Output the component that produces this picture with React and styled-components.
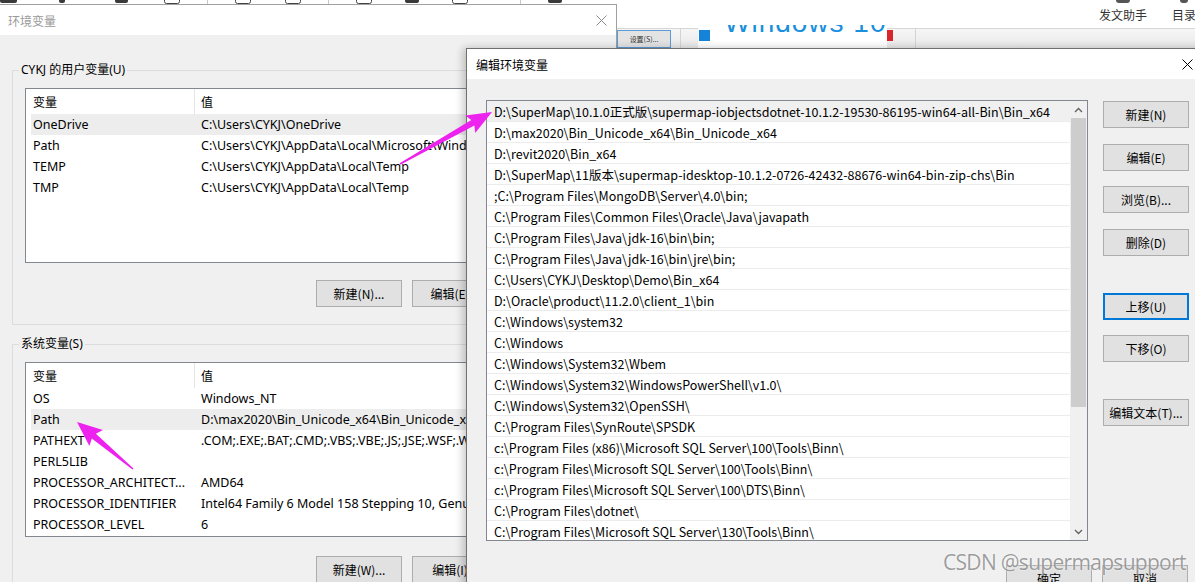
import React from "react"
import styled, { createGlobalStyle, css } from "styled-components"

const GlobalStyle = createGlobalStyle`
  html, body {
    margin: 0;
    padding: 0;
  }
  body {
    background: #ffffff;
    font-family: "Noto Sans", "Noto Sans CJK SC", sans-serif;
  }
`

const Desktop = styled.div`
    position: relative;
    width: 1195px;
    height: 582px;
    overflow: hidden;
    background: #ffffff;
`

/* ---------- app behind the dialogs ---------- */

const TopBar = styled.div`
    height: 28px;
    display: flex;
    align-items: flex-start;
    border-bottom: 1px solid #d6d6d6;
    background: #ffffff;
`
const ToolGroup = styled.div`
    margin-left: auto;
    display: flex;
    gap: 25px;
    margin-right: -1px;
`
const Tool = styled.div`
    display: flex;
    flex-direction: column;
    align-items: center;
`
const ToolStub = styled.div`
    width: ${p => p.$w}px;
    height: 3px;
    background: #555;
    border-radius: 0 0 3px 3px;
`
const ToolLabel = styled.div`
    margin-top: 4px;
    font-family: "Noto Sans CJK SC", sans-serif;
    font-size: 12px;
    line-height: 16px;
    color: #333;
    white-space: nowrap;
`
const SubStrip = styled.div`
    height: 19px;
    display: flex;
    align-items: flex-start;
    background: linear-gradient(#f6f6f6, #e9e9e9);
`
const StripSpacer = styled.div`
    width: ${p => p.$w}px;
    flex-shrink: 0;
`
const SetButton = styled.div`
    width: 54px;
    height: 18px;
    margin-top: 1px;
    box-sizing: border-box;
    border: 1px solid #5b9bd9;
    background: #e3e3e3;
    font-family: "Noto Sans CJK SC", sans-serif;
    font-size: 7px;
    line-height: 16px;
    text-align: center;
    color: #333;
`
const VLine = styled.div`
    width: 1px;
    height: 19px;
    background: #d4d4d4;
    margin-left: ${p => p.$ml}px;
`
const PromoPanel = styled.div`
    width: 189px;
    height: 23px;
    margin-top: -4px;
    margin-left: 17px;
    background: #ffffff;
    overflow: hidden;
    display: flex;
    align-items: flex-start;
`
const WinSquare = styled.div`
    width: 11px;
    height: 11px;
    margin: 5px 0 0 1px;
    background: #1583d8;
`
const WinText = styled.div`
    margin: -19px 0 0 14px;
    font-family: "Liberation Sans", sans-serif;
    font-size: 28px;
    line-height: 34px;
    letter-spacing: 1px;
    color: #1a8fdc;
    white-space: nowrap;
`
const RedMark = styled.div`
    width: 6px;
    height: 11px;
    margin: 1px 0 0 0;
    background: #d9262c;
`

/* ---------- shared window parts ---------- */

const TitleBar = styled.div`
    height: 30px;
    flex-shrink: 0;
    display: flex;
    align-items: center;
    background: #ffffff;
    padding-left: ${p => p.$pad}px;
    font-family: "Noto Sans CJK SC", sans-serif;
    font-size: 12px;
    color: ${p => (p.$active ? "#000000" : "#9a9a9a")};
`
const CloseButton = styled.div`
    margin-left: auto;
    width: ${p => p.$w}px;
    height: 30px;
    display: flex;
    align-items: center;
    justify-content: center;
`
const Button = styled.button`
    width: 86px;
    height: 27px;
    flex-shrink: 0;
    box-sizing: border-box;
    padding: 0;
    margin: ${p => p.$mt || 0}px 0 0 0;
    background: #e1e1e1;
    border: 1px solid #adadad;
    font-family: "Noto Sans CJK SC", sans-serif;
    font-size: 12px;
    color: #000;
    white-space: nowrap;
    ${p => p.$focused && css`
        border: 2px solid #0078d7;
    `}
`

function CloseIcon({ color }) {
    return (
        <svg width="11" height="11" viewBox="0 0 11 11">
            <path d="M0.5 0.5 L10.5 10.5 M10.5 0.5 L0.5 10.5" stroke={color} strokeWidth="1" fill="none" />
        </svg>
    )
}

/* ---------- 环境变量 window ---------- */

const EnvWindow = styled.div`
    position: absolute;
    left: 0;
    top: 4px;
    width: 617px;
    height: 600px;
    box-sizing: border-box;
    border: 1px solid #a0a0a0;
    border-left: none;
    background: #f0f0f0;
    display: flex;
    flex-direction: column;
`
const EnvBody = styled.div`
    padding: 27px 12px 0 12px;
`
const GroupBox = styled.fieldset`
    margin: ${p => p.$mt || 0}px 0 0 0;
    padding: 10px 2px 17px 6px;
    border: 1px solid #dcdcdc;
    min-width: 0;
`
const GroupLegend = styled.legend`
    padding: 0 2px;
    font-family: "Noto Sans", "Noto Sans CJK SC", sans-serif;
    font-size: 12px;
    line-height: 16px;
    color: #000;
`
const ListView = styled.div`
    height: 175px;
    margin-left: 6px;
    box-sizing: border-box;
    border: 1px solid #828790;
    background: #ffffff;
    overflow: hidden;
`
const ListHeader = styled.div`
    height: 25px;
    margin-left: 5px;
    display: grid;
    grid-template-columns: 164px 1fr;
`
const HeaderCell = styled.div`
    padding-left: ${p => (p.$first ? 2 : 6)}px;
    border-right: ${p => (p.$first ? "1px solid #e5e5e5" : "none")};
    font-family: "Noto Sans CJK SC", sans-serif;
    font-size: 12px;
    line-height: 25px;
    color: #000;
`
const ListRow = styled.div`
    height: 21px;
    margin-left: 5px;
    display: grid;
    grid-template-columns: 168px 1fr;
    background: ${p => (p.$selected ? "#ededed" : "transparent")};
`
const Cell = styled.div`
    padding-left: 2px;
    font-size: 12.5px;
    line-height: 21px;
    color: #000;
    white-space: nowrap;
    overflow: hidden;
`
const ButtonRow = styled.div`
    display: flex;
    gap: 10px;
    margin-top: ${p => p.$mt}px;
    padding-left: 297px;
    height: 27px;
`

/* ---------- 编辑环境变量 window ---------- */

const EditWindow = styled.div`
    position: absolute;
    left: 466px;
    top: 48px;
    width: 745px;
    height: 560px;
    box-sizing: border-box;
    border: 1px solid #707070;
    background: #f0f0f0;
    box-shadow: -3px 0 8px rgba(0, 0, 0, 0.22);
    display: flex;
    flex-direction: column;
`
const EditBody = styled.div`
    padding: 21px 22px 0 19px;
`
const EditMain = styled.div`
    display: flex;
    align-items: flex-start;
`
const PathList = styled.div`
    width: 602px;
    height: 441px;
    flex-shrink: 0;
    box-sizing: border-box;
    border: 1px solid #828790;
    background: #ffffff;
    display: flex;
`
const PathRows = styled.div`
    flex: 1;
    overflow: hidden;
`
const PathRow = styled.div`
    height: 21px;
    box-sizing: border-box;
    padding-left: 7px;
    border-bottom: 1px solid #ececec;
    background: ${p => (p.$selected ? "#f0f0f0" : "#ffffff")};
    font-family: "Noto Sans CJK SC", sans-serif;
    font-size: 12.5px;
    line-height: 21px;
    color: #000;
    white-space: nowrap;
`
const ScrollBar = styled.div`
    width: 17px;
    flex-shrink: 0;
    background: #f0f0f0;
    display: flex;
    flex-direction: column;
`
const ScrollArrow = styled.div`
    height: 17px;
    display: flex;
    align-items: center;
    justify-content: center;
    margin-top: ${p => (p.$bottom ? "auto" : "0")};
`
const ScrollThumb = styled.div`
    height: 289px;
    margin: 0 1px;
    background: #cdcdcd;
`
const ButtonColumn = styled.div`
    margin-left: 15px;
    padding-top: 1px;
    display: flex;
    flex-direction: column;
`
const Footer = styled.div`
    display: flex;
    justify-content: flex-end;
    gap: 10px;
    margin-top: 24px;
`

/* ---------- overlays ---------- */

const Overlay = styled.svg`
    position: absolute;
    left: 0;
    top: 0;
    pointer-events: none;
`
const Watermark = styled.div`
    position: absolute;
    left: 943px;
    top: 547px;
    font-family: "Open Sans", sans-serif;
    font-size: 21px;
    line-height: 30px;
    letter-spacing: -0.7px;
    color: rgba(120, 120, 120, 0.72);
    text-shadow: 0 0 2px #ffffff;
    white-space: nowrap;
    pointer-events: none;
`

function arrowPoints(tail, tip, head, wing, neck, tailW) {
    const dx = tip[0] - tail[0]
    const dy = tip[1] - tail[1]
    const len = Math.hypot(dx, dy)
    const ux = dx / len
    const uy = dy / len
    const px = -uy
    const py = ux
    const bx = tip[0] - ux * head
    const by = tip[1] - uy * head
    const pts = [
        [tail[0] + px * tailW, tail[1] + py * tailW],
        [bx + px * neck, by + py * neck],
        [bx + px * wing - ux * 3, by + py * wing - uy * 3],
        tip,
        [bx - px * wing - ux * 3, by - py * wing - uy * 3],
        [bx - px * neck, by - py * neck],
        [tail[0] - px * tailW, tail[1] - py * tailW],
    ]
    return pts.map(p => p[0].toFixed(1) + "," + p[1].toFixed(1)).join(" ")
}

const userVars = [
    ["OneDrive", "C:\\Users\\CYKJ\\OneDrive", true],
    ["Path", "C:\\Users\\CYKJ\\AppData\\Local\\Microsoft\\WindowsApps"],
    ["TEMP", "C:\\Users\\CYKJ\\AppData\\Local\\Temp"],
    ["TMP", "C:\\Users\\CYKJ\\AppData\\Local\\Temp"],
]

const sysVars = [
    ["OS", "Windows_NT"],
    ["Path", "D:\\max2020\\Bin_Unicode_x64\\Bin_Unicode_x64;D:\\revit2020\\Bin_x64", true],
    ["PATHEXT", ".COM;.EXE;.BAT;.CMD;.VBS;.VBE;.JS;.JSE;.WSF;.WSH;.MSC"],
    ["PERL5LIB", ""],
    ["PROCESSOR_ARCHITECT...", "AMD64"],
    ["PROCESSOR_IDENTIFIER", "Intel64 Family 6 Model 158 Stepping 10, GenuineIntel"],
    ["PROCESSOR_LEVEL", "6"],
]

const paths = [
    "D:\\SuperMap\\10.1.0正式版\\supermap-iobjectsdotnet-10.1.2-19530-86195-win64-all-Bin\\Bin_x64",
    "D:\\max2020\\Bin_Unicode_x64\\Bin_Unicode_x64",
    "D:\\revit2020\\Bin_x64",
    "D:\\SuperMap\\11版本\\supermap-idesktop-10.1.2-0726-42432-88676-win64-bin-zip-chs\\Bin",
    ";C:\\Program Files\\MongoDB\\Server\\4.0\\bin;",
    "C:\\Program Files\\Common Files\\Oracle\\Java\\javapath",
    "C:\\Program Files\\Java\\jdk-16\\bin\\bin;",
    "C:\\Program Files\\Java\\jdk-16\\bin\\jre\\bin;",
    "C:\\Users\\CYKJ\\Desktop\\Demo\\Bin_x64",
    "D:\\Oracle\\product\\11.2.0\\client_1\\bin",
    "C:\\Windows\\system32",
    "C:\\Windows",
    "C:\\Windows\\System32\\Wbem",
    "C:\\Windows\\System32\\WindowsPowerShell\\v1.0\\",
    "C:\\Windows\\System32\\OpenSSH\\",
    "C:\\Program Files\\SynRoute\\SPSDK",
    "c:\\Program Files (x86)\\Microsoft SQL Server\\100\\Tools\\Binn\\",
    "c:\\Program Files\\Microsoft SQL Server\\100\\Tools\\Binn\\",
    "c:\\Program Files\\Microsoft SQL Server\\100\\DTS\\Binn\\",
    "C:\\Program Files\\dotnet\\",
    "C:\\Program Files\\Microsoft SQL Server\\130\\Tools\\Binn\\",
]

const toolbarStubs = [
    [0, 17, "fill"], [59, 6, "fill"], [115, 13, "fill"], [164, 16, "box"],
    [207, 1, "line"], [235, 16, "box"], [285, 16, "box"], [328, 1, "line"],
    [356, 16, "box"], [405, 14, "fill"], [452, 16, "box"], [520, 1, "line"],
    [548, 14, "fill"],
]

function VarList({ rows }) {
    return (
        <ListView>
            <ListHeader>
                <HeaderCell $first>变量</HeaderCell>
                <HeaderCell>值</HeaderCell>
            </ListHeader>
            {rows.map(([name, value, selected], i) => (
                <ListRow key={i} $selected={selected}>
                    <Cell>{name}</Cell>
                    <Cell>{value}</Cell>
                </ListRow>
            ))}
        </ListView>
    )
}

function Chevron({ up }) {
    return (
        <svg width="9" height="6" viewBox="0 0 9 6">
            <path d={up ? "M1 5 L4.5 1.5 L8 5" : "M1 1 L4.5 4.5 L8 1"} stroke="#606060" strokeWidth="1.3" fill="none" />
        </svg>
    )
}

export default function App() {
    return (
        <Desktop>
            <GlobalStyle />

            <TopBar>
                <svg width="617" height="5" viewBox="0 0 617 5">
                    {toolbarStubs.map(([x, w, kind], i) =>
                        kind === "box" ? (
                            <rect key={i} x={x + 0.5} y={-3} width={w - 1} height={6.5} rx="2" fill="none" stroke="#444" strokeWidth="1" />
                        ) : (
                            <rect key={i} x={x} y={-2} width={w} height={kind === "line" ? 7 : 5} rx={kind === "line" ? 0 : 2} fill={kind === "line" ? "#c8c8c8" : "#3a3a3a"} />
                        )
                    )}
                </svg>
                <ToolGroup>
                    <Tool>
                        <ToolStub $w={14} />
                        <ToolLabel>发文助手</ToolLabel>
                    </Tool>
                    <Tool>
                        <ToolStub $w={8} />
                        <ToolLabel>目录</ToolLabel>
                    </Tool>
                </ToolGroup>
            </TopBar>

            <SubStrip>
                <StripSpacer $w={617} />
                <SetButton>设置(S)...</SetButton>
                <VLine $ml={9} />
                <PromoPanel>
                    <WinSquare />
                    <WinText>Windows 10</WinText>
                </PromoPanel>
                <RedMark />
                <VLine $ml={22} />
            </SubStrip>

            <EnvWindow>
                <TitleBar $pad={8}>
                    环境变量
                    <CloseButton $w={30}>
                        <CloseIcon color="#8a8a8a" />
                    </CloseButton>
                </TitleBar>
                <EnvBody>
                    <GroupBox>
                        <GroupLegend>CYKJ 的用户变量(U)</GroupLegend>
                        <VarList rows={userVars} />
                        <ButtonRow $mt={17}>
                            <Button>新建(N)...</Button>
                            <Button>编辑(E)...</Button>
                            <Button>删除(D)</Button>
                        </ButtonRow>
                    </GroupBox>
                    <GroupBox $mt={11}>
                        <GroupLegend>系统变量(S)</GroupLegend>
                        <VarList rows={sysVars} />
                        <ButtonRow $mt={19}>
                            <Button>新建(W)...</Button>
                            <Button>编辑(I)...</Button>
                            <Button>删除(L)</Button>
                        </ButtonRow>
                    </GroupBox>
                </EnvBody>
            </EnvWindow>

            <EditWindow>
                <TitleBar $pad={9} $active>
                    编辑环境变量
                    <CloseButton $w={46}>
                        <CloseIcon color="#000" />
                    </CloseButton>
                </TitleBar>
                <EditBody>
                    <EditMain>
                        <PathList>
                            <PathRows>
                                {paths.map((p, i) => (
                                    <PathRow key={i} $selected={i === 0}>{p}</PathRow>
                                ))}
                            </PathRows>
                            <ScrollBar>
                                <ScrollArrow><Chevron up /></ScrollArrow>
                                <ScrollThumb />
                                <ScrollArrow $bottom><Chevron /></ScrollArrow>
                            </ScrollBar>
                        </PathList>
                        <ButtonColumn>
                            <Button>新建(N)</Button>
                            <Button $mt={16}>编辑(E)</Button>
                            <Button $mt={15}>浏览(B)...</Button>
                            <Button $mt={16}>删除(D)</Button>
                            <Button $mt={37} $focused>上移(U)</Button>
                            <Button $mt={15}>下移(O)</Button>
                            <Button $mt={37}>编辑文本(T)...</Button>
                        </ButtonColumn>
                    </EditMain>
                    <Footer>
                        <Button>确定</Button>
                        <Button>取消</Button>
                    </Footer>
                </EditBody>
            </EditWindow>

            <Overlay width="1195" height="582" viewBox="0 0 1195 582">
                <polygon points={arrowPoints([400, 164], [492, 112], 22, 10, 3.2, 0.8)} fill="#ee22ee" />
                <polygon points={arrowPoints([133, 469], [77, 422], 22, 10.5, 3.2, 0.8)} fill="#ee22ee" />
            </Overlay>

            <Watermark>CSDN @supermapsupport</Watermark>
        </Desktop>
    )
}
